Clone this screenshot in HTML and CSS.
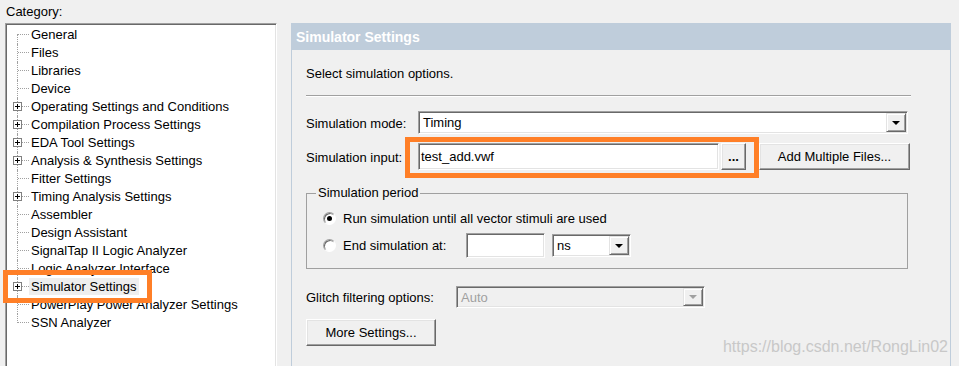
FILE: index.html
```html
<!doctype html>
<html>
 <head>
	<meta charset="UTF-8">
	<title>Settings - Simulator Settings</title>
	<link rel="stylesheet" href="styles.css">
 </head>
 <body>
	<div class="window">
		<div class="left">
			<div class="cat-label">Category:</div>
			<ul class="tree">
				<li class="node"><span class="txt">General</span></li>
				<li class="node"><span class="txt">Files</span></li>
				<li class="node"><span class="txt">Libraries</span></li>
				<li class="node"><span class="txt">Device</span></li>
				<li class="node"><span class="pm"></span><span class="txt">Operating Settings and Conditions</span></li>
				<li class="node"><span class="pm"></span><span class="txt">Compilation Process Settings</span></li>
				<li class="node"><span class="pm"></span><span class="txt">EDA Tool Settings</span></li>
				<li class="node"><span class="pm"></span><span class="txt">Analysis &amp; Synthesis Settings</span></li>
				<li class="node"><span class="txt">Fitter Settings</span></li>
				<li class="node"><span class="pm"></span><span class="txt">Timing Analysis Settings</span></li>
				<li class="node"><span class="txt">Assembler</span></li>
				<li class="node"><span class="txt">Design Assistant</span></li>
				<li class="node"><span class="txt">SignalTap II Logic Analyzer</span></li>
				<li class="node"><span class="txt">Logic Analyzer Interface</span></li>
				<li class="node"><span class="pm"></span><span class="txt sel">Simulator Settings</span><span class="mark mark-tree"></span></li>
				<li class="node"><span class="txt">PowerPlay Power Analyzer Settings</span></li>
				<li class="node"><span class="txt">SSN Analyzer</span></li>
			</ul>
		</div>

		<div class="panel">
			<div class="panel-head">Simulator Settings</div>
			<div class="panel-body">
				<p class="intro">Select simulation options.</p>
				<hr class="sep">

				<div class="field row-mode">
					<label>Simulation mode:</label>
					<div class="combo wide"><span class="val">Timing</span><span class="drop"><i class="arrow"></i></span></div>
				</div>

				<div class="field row-input">
					<label>Simulation input:</label>
					<div class="edit file">test_add.vwf</div>
					<button class="btn dots">...</button>
					<button class="btn add">Add Multiple Files...</button>
					<span class="mark mark-input"></span>
				</div>

				<fieldset class="group">
					<legend>Simulation period</legend>
					<div class="opt first"><span class="radio on"></span>Run simulation until all vector stimuli are used</div>
					<div class="opt end">
						<span class="radio"></span>
						<span class="opt-text">End simulation at:</span>
						<div class="edit end-at"></div>
						<div class="combo unit"><span class="val">ns</span><span class="drop"><i class="arrow"></i></span></div>
					</div>
				</fieldset>

				<div class="field row-glitch">
					<label>Glitch filtering options:</label>
					<div class="combo glitch"><span class="val">Auto</span><span class="drop"><i class="arrow"></i></span></div>
				</div>

				<button class="btn more">More Settings...</button>
			</div>
		</div>

		<div class="watermark">https://blog.csdn.net/RongLin02</div>
	</div>
 </body>
</html>
```

FILE: styles.css
```css
body{
	margin:0;
	background:#f0f0f0;
	font:13px "Liberation Sans", Arial, sans-serif;
	color:#000;
}
.window{
	position:relative;
	display:flex;
	align-items:flex-start;
	height:366px;
	overflow:hidden;
}

/* 左侧：分类树 */
.left{width:272px;margin-left:5px}
.cat-label{height:23px;line-height:24px;padding-left:1px}
.tree{
	list-style:none;
	margin:0;
	padding:2px 0 0 1px;
	height:360px;
	background:#fff;
	border:1px solid;
	border-color:#a0a0a0 #fff #fff #a0a0a0;
	box-shadow:inset 1px 1px #696969, inset -1px -1px #e3e3e3;
}
.node{
	position:relative;
	height:18px;
	line-height:18px;
	padding-left:24px;
	white-space:nowrap;
}
/* 树的虚线 */
.node::before{
	content:"";
	position:absolute;
	left:10px;top:0;bottom:0;
	border-left:1px dotted #a0a0a0;
}
.node:first-child::before{top:8px}
.node:last-child::before{bottom:9px}
.node::after{
	content:"";
	position:absolute;
	left:11px;top:8px;
	width:11px;
	border-top:1px dotted #a0a0a0;
}
/* 展开按钮 [+] */
.pm{
	position:absolute;
	left:6px;top:4px;
	width:7px;height:7px;
	border:1px solid #808080;
	background:#fff linear-gradient(#000,#000) center/5px 1px no-repeat;
	z-index:1;
}
.pm::before{
	content:"";
	position:absolute;
	left:3px;top:1px;
	width:1px;height:5px;
	background:#000;
}
.sel{background:#eeeeee;padding:1px 2px;margin-left:-2px}

/* 橙色标注框 */
.mark{
	position:absolute;
	box-sizing:border-box;
	border:5px solid #ff7f27;
	z-index:2;
}
.mark-tree{left:-4px;top:-8px;width:149px;height:33px}
.mark-input{left:99px;top:-6px;width:354px;height:41px}

/* 右侧：设置面板 */
.panel{width:660px;margin:23px 0 0 14px}
.panel-head{
	height:27px;
	line-height:28px;
	padding-left:5px;
	background:#bfcddb;
	color:#fff;
	font-weight:bold;
	font-size:14px;
}
.panel-body{
	height:330px;
	border:solid #bfcddb;
	border-width:0 1px;
	padding:15px 39px 0 14px;
}
.intro{margin:0;line-height:18px}
.sep{
	margin:12px 0 14px;
	height:0;
	border:0;
	border-top:1px solid #a0a0a0;
	border-bottom:1px solid #fff;
}

.field{display:flex;align-items:center;position:relative}
.field label{width:112px;flex:none;padding-top:1px}
.row-mode{height:23px}
.row-input{margin-top:9px;height:27px}
.row-glitch{margin-top:17px;height:22px}
.row-glitch label{width:150px}

/* 下拉框、文本框：凹陷边框 */
.combo,.edit{
	box-sizing:border-box;
	background:#fff;
	border:1px solid;
	border-color:#a0a0a0 #fff #fff #a0a0a0;
	box-shadow:inset 1px 1px #696969, inset -1px -1px #e3e3e3;
}
.combo{display:flex;align-items:center;height:23px;padding:1px}
.combo .val{flex:1;padding-left:3px}
.drop{
	display:flex;
	align-items:center;
	justify-content:center;
	box-sizing:border-box;
	width:20px;height:19px;
	background:#f0f0f0;
	border:1px solid;
	border-color:#e3e3e3 #696969 #696969 #e3e3e3;
	box-shadow:inset 1px 1px #fff, inset -1px -1px #a0a0a0;
}
.arrow{
	width:0;height:0;
	border-left:4px solid transparent;
	border-right:4px solid transparent;
	border-top:4px solid #000;
}
.wide{width:490px}
.edit{height:27px;line-height:25px;padding-left:2px}
.file{width:301px}

.combo.glitch{width:249px;height:22px;background:#f0f0f0;color:#a0a0a0}
.glitch .drop{height:18px}
.glitch .arrow{border-top-color:#a0a0a0}

/* 按钮：凸起边框 */
.btn{
	font:inherit;
	color:#000;
	background:#f0f0f0;
	border:1px solid;
	border-color:#fff #696969 #696969 #fff;
	box-shadow:inset -1px -1px #a0a0a0, inset 1px 1px #e3e3e3;
	padding:0;
	height:27px;
	box-sizing:border-box;
}
.dots{width:25px;margin-left:2px;font-weight:bold;line-height:20px}
.add{width:151px;margin-left:13px}
.more{display:block;margin-top:11px;width:130px}

/* 分组框 */
.group{
	margin:15px 0 0;
	width:602px;
	box-sizing:border-box;
	border:1px solid #a0a0a0;
	padding:0 0 10px 16px;
	min-width:0;
}
.group legend{padding:0 2px;margin-left:-7px;line-height:16px}
.opt{display:flex;align-items:center;height:18px}
.opt.first{margin-top:8px}
.opt.end{height:25px;margin-top:6px}
.radio{
	position:relative;
	box-sizing:border-box;
	width:13px;height:13px;
	border-radius:50%;
	background:#fff;
	border:1px solid;
	border-color:#a0a0a0 #fff #fff #a0a0a0;
	box-shadow:inset 1px 1px #696969;
	margin-right:7px;
}
.radio.on::after{
	content:"";
	position:absolute;
	left:3px;top:3px;
	width:5px;height:5px;
	border-radius:50%;
	background:#000;
}
.opt-text{width:123px}
.edit.end-at{width:79px;height:25px}
.combo.unit{width:79px;margin-left:7px}

.watermark{
	position:absolute;
	right:11px;top:338px;
	font-size:16px;
	line-height:18px;
	color:#c8c8c8;
}
```
